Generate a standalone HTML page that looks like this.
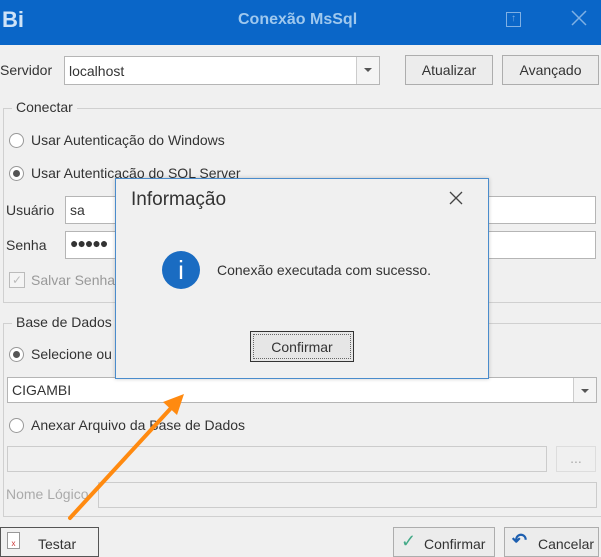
<!DOCTYPE html><html><head><style>
body{margin:0;width:601px;height:551px;background:#f0f0f0;font-family:"Liberation Sans",sans-serif;font-size:14px;color:#333;position:relative;overflow:hidden}
.a{position:absolute}
.in{position:absolute;background:#fff;border:1px solid #b5b5b5;box-sizing:border-box}
.btn{position:absolute;background:#ececec;border:1px solid #adadad;box-sizing:border-box;text-align:center}
.rad{position:absolute;width:15px;height:15px;border:1px solid #999;border-radius:50%;background:#fff;box-sizing:border-box}
.rad.on::after{content:"";position:absolute;left:3px;top:3px;width:7px;height:7px;border-radius:50%;background:#555}
.dd{position:absolute;top:0;right:0;bottom:0;width:22px;border-left:1px solid #ccc;background:#f4f4f4}
.dd::after{content:"";position:absolute;left:7px;top:11px;border:4px solid transparent;border-top:4px solid #555}
.grp{position:absolute;border:1px solid #d0d0d0;border-right:none}
</style></head><body>
<div class="a" style="left:0;top:0;width:601px;height:45px;background:#0a66c8"></div>
<div class="a" style="left:2px;top:7px;color:#cfe3f7;font-weight:bold;font-size:22px">Bi</div>
<div class="a" style="left:238px;top:11px;color:#9fc8ee;font-weight:bold;font-size:16px">Conexão MsSql</div>
<div class="a" style="left:506px;top:12px;width:13px;height:13px;border:1px solid #7fb0e4;color:#7fb0e4;font-size:10px;line-height:12px;text-align:center">↑</div>
<svg class="a" style="left:571px;top:10px" width="16" height="16"><path d="M1 1L15 15M15 1L1 15" stroke="#7fb0e4" stroke-width="1.5"/></svg>

<div class="a" style="left:0;top:62px">Servidor</div>
<div class="in" style="left:64px;top:56px;width:316px;height:29px"><span class="a" style="left:4px;top:6px">localhost</span><div class="dd"></div></div>
<div class="btn" style="left:405px;top:55px;width:88px;height:30px;line-height:28px">Atualizar</div>
<div class="btn" style="left:502px;top:55px;width:97px;height:30px;line-height:28px">Avançado</div>

<div class="grp" style="left:3px;top:108px;width:598px;height:193px"></div>
<div class="a" style="left:12px;top:99px;background:#f0f0f0;padding:0 4px">Conectar</div>
<div class="rad" style="left:9px;top:133px"></div><div class="a" style="left:31px;top:132px">Usar Autenticação do Windows</div>
<div class="rad on" style="left:9px;top:166px"></div><div class="a" style="left:31px;top:165px">Usar Autenticação do SQL Server</div>
<div class="a" style="left:6px;top:202px">Usuário</div>
<div class="in" style="left:65px;top:196px;width:531px;height:28px"><span class="a" style="left:4px;top:5px">sa</span></div>
<div class="a" style="left:6px;top:237px">Senha</div>
<div class="in" style="left:65px;top:231px;width:531px;height:28px"><span class="a" style="left:4px;top:3px;font-size:14px;letter-spacing:-1px">●●●●●</span></div>
<div class="a" style="left:9px;top:272px;width:14px;height:14px;border:1px solid #bbb;background:#f4f4f4;color:#bbb;font-size:12px;line-height:14px;text-align:center">✓</div>
<div class="a" style="left:31px;top:272px;color:#999">Salvar Senha</div>

<div class="grp" style="left:3px;top:323px;width:598px;height:192px"></div>
<div class="a" style="left:12px;top:314px;background:#f0f0f0;padding:0 4px">Base de Dados</div>
<div class="rad on" style="left:9px;top:347px"></div><div class="a" style="left:31px;top:346px">Selecione ou</div>
<div class="in" style="left:7px;top:377px;width:590px;height:26px"><span class="a" style="left:4px;top:4px">CIGAMBI</span><div class="dd"></div></div>
<div class="rad" style="left:9px;top:418px"></div><div class="a" style="left:31px;top:417px">Anexar Arquivo da Base de Dados</div>
<div class="a" style="left:7px;top:446px;width:540px;height:26px;border:1px solid #ccc;box-sizing:border-box"></div>
<div class="a" style="left:556px;top:446px;width:40px;height:26px;border:1px solid #ddd;box-sizing:border-box;color:#aaa;text-align:center;line-height:22px">...</div>
<div class="a" style="left:6px;top:486px;color:#aaa">Nome Lógico</div>
<div class="a" style="left:98px;top:482px;width:499px;height:26px;border:1px solid #ccc;box-sizing:border-box"></div>

<div class="btn" style="left:0;top:527px;width:99px;height:30px;border-color:#555;background:#f0f0f0"><span class="a" style="left:37px;top:8px">Testar</span><div class="a" style="left:6px;top:4px;width:11px;height:15px;border:1px solid #999;background:#fff;font-size:8px;color:#c33;line-height:22px">x</div></div>
<div class="btn" style="left:393px;top:527px;width:102px;height:30px"><span class="a" style="left:30px;top:8px">Confirmar</span><span class="a" style="left:7px;top:3px;color:#4a8;font-size:18px">✓</span></div>
<div class="btn" style="left:504px;top:527px;width:95px;height:30px"><span class="a" style="left:33px;top:8px">Cancelar</span><span class="a" style="left:7px;top:2px;color:#1d5fb0;font-size:18px;font-weight:bold">↶</span></div>

<div class="a" style="left:115px;top:178px;width:374px;height:201px;background:#f0f0f0;border:1px solid #4a8ccc;box-sizing:border-box;box-shadow:0 0 4px rgba(0,0,0,.2)">
<div class="a" style="left:15px;top:10px;font-size:19px;color:#333">Informação</div>
<svg class="a" style="left:333px;top:12px" width="14" height="14"><path d="M1 1L13 13M13 1L1 13" stroke="#444" stroke-width="1.3"/></svg>
<div class="a" style="left:46px;top:72px;width:38px;height:38px;border-radius:50%;background:#1a6cc2;color:#fff;text-align:center;line-height:38px;font-size:26px">i</div>
<div class="a" style="left:101px;top:83px;font-size:14px">Conexão executada com sucesso.</div>
<div class="a" style="left:134px;top:152px;width:104px;height:31px;border:1px solid #333;box-sizing:border-box;background:#e6e6e6"><div class="a" style="left:2px;top:2px;right:2px;bottom:2px;border:1px dotted #666;text-align:center;line-height:24px;font-size:14px">Confirmar</div></div>
</div>

<svg class="a" style="left:0;top:0" width="601" height="551"><line x1="70" y1="518" x2="172" y2="407" stroke="#ff8a10" stroke-width="4" stroke-linecap="round"/><polygon points="184,394 163,402 177,415" fill="#ff8a10"/></svg>
</body></html>
